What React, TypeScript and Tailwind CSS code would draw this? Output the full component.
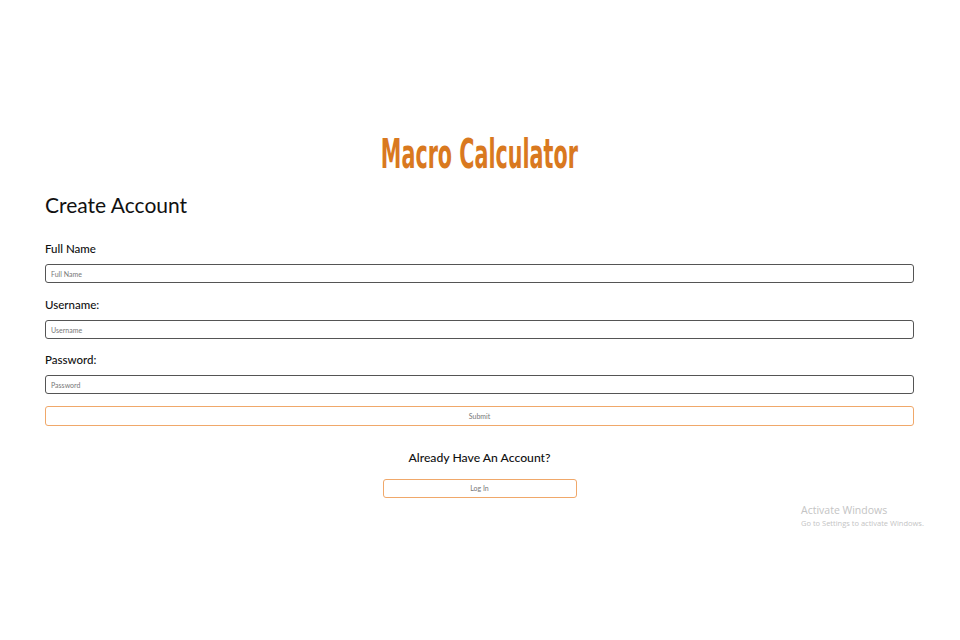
export default function App() {
  return (
    <div className="relative w-[960px] h-[640px] bg-white font-['Lato','Liberation_Sans',sans-serif] text-[#111]">
      <div className="pt-[128px] px-[45px] pr-[46px]">
        <h1 className="text-center text-[40px] leading-[52px] font-semibold text-[#d9791f] font-['DejaVu_Sans_Condensed',sans-serif]">
          <span className="inline-block scale-x-[0.575]">Macro Calculator</span>
        </h1>
        <h2 className="mt-[11px] text-[21px] leading-[28px] text-[#111]">Create Account</h2>

        <form className="mt-[22px] flex flex-col">
          <label className="text-[11.5px] leading-[16px] font-medium">Full Name</label>
          <input
            placeholder="Full Name"
            className="mt-[7px] h-[19px] w-full rounded-[3px] border border-[#555] px-[5px] text-[7px] placeholder:text-[#777]"
          />
          <label className="mt-[14px] text-[11.5px] leading-[16px] font-medium">Username:</label>
          <input
            placeholder="Username"
            className="mt-[7px] h-[19px] w-full rounded-[3px] border border-[#555] px-[5px] text-[7px] placeholder:text-[#777]"
          />
          <label className="mt-[13px] text-[11.5px] leading-[16px] font-medium">Password:</label>
          <input
            placeholder="Password"
            className="mt-[7px] h-[19px] w-full rounded-[3px] border border-[#555] px-[5px] text-[7px] placeholder:text-[#777]"
          />
          <button
            type="button"
            className="mt-[12px] h-[20px] w-full rounded-[3px] border border-[#f0a86a] text-[7px] text-[#777]"
          >
            Submit
          </button>
        </form>

        <div className="mt-[23px] flex flex-col items-center">
          <p className="text-[12.2px] leading-[18px] font-medium">Already Have An Account?</p>
          <button
            type="button"
            className="mt-[12px] h-[19px] w-[194px] rounded-[3px] border border-[#f0a86a] text-[7px] text-[#777]"
          >
            Log In
          </button>
        </div>
      </div>

      <div className="absolute left-[801px] top-[503px] font-['Open_Sans',sans-serif] text-[#c4c4c4]">
        <p className="text-[10.5px] leading-[14px]">Activate Windows</p>
        <p className="text-[7.5px] leading-[12px]">Go to Settings to activate Windows.</p>
      </div>
    </div>
  );
}
